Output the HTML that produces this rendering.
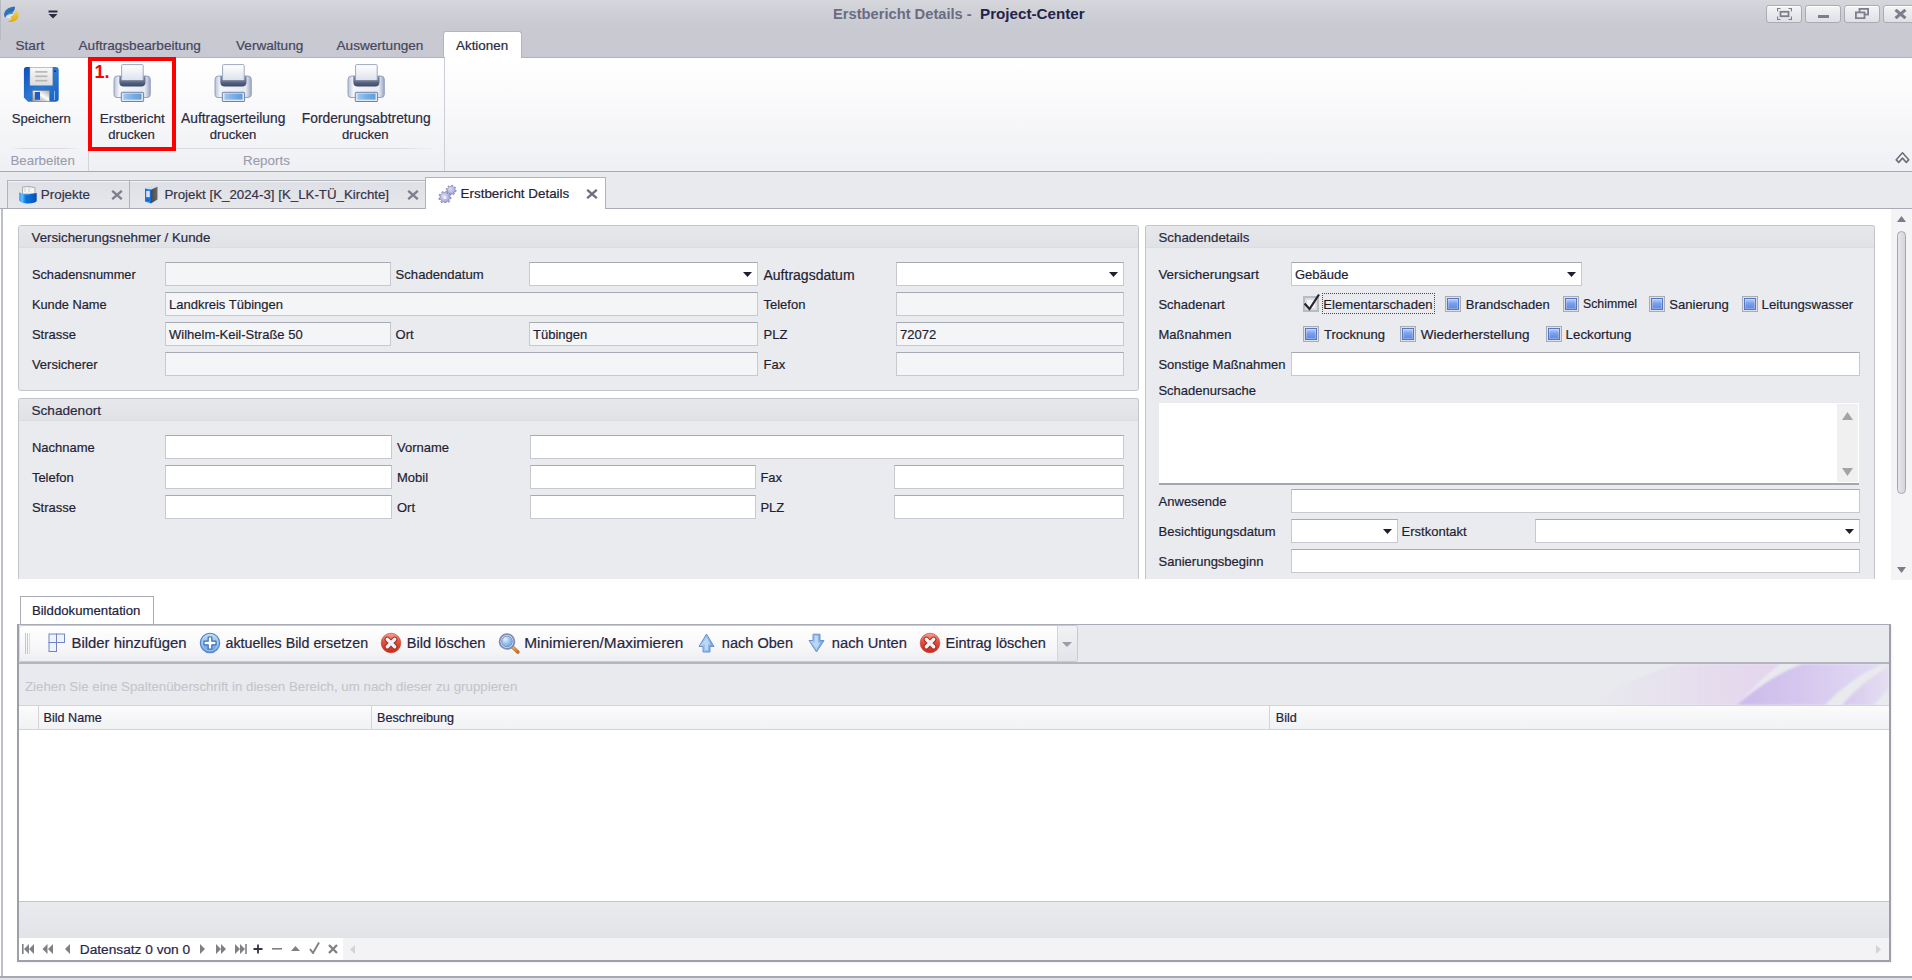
<!DOCTYPE html><html><head><meta charset="utf-8"><style>
html,body{margin:0;padding:0;width:1912px;height:980px;overflow:hidden;background:#fff;}
body{position:relative;font-family:"Liberation Sans",sans-serif;}
div{position:absolute;box-sizing:border-box;}
.t{white-space:nowrap;}
</style></head><body>
<div style="left:0px;top:0px;width:1912px;height:58px;background:linear-gradient(#d6d7dc 0px,#d3d4d9 6px,#cfd0d7 12px,#c9cad1 27px,#c7c8d1 57px);"></div>
<div style="left:0px;top:0px;width:1px;height:40px;background:#b8bac3;"></div>
<svg style="position:absolute;left:0px;top:2px" width="24" height="24" viewBox="0 0 24 24"><defs><linearGradient id="lgb" x1="0" y1="0" x2="1" y2="1"><stop offset="0" stop-color="#3a7fc8"/><stop offset="1" stop-color="#1f5a9e"/></linearGradient>
<linearGradient id="lgy" x1="0" y1="0" x2="0" y2="1"><stop offset="0" stop-color="#f4d64a"/><stop offset="1" stop-color="#e0a810"/></linearGradient></defs>
<path d="M15 4.8 C10 4.6 5.3 7 4.2 11.5 C3.8 13.5 4.4 15 5.5 15.6 C6.2 12.5 8.8 10.6 13.5 9.4 C14.6 8 15 6.5 15 4.8Z" fill="url(#lgb)"/>
<path d="M12.5 9.6 C9.5 10.2 7.5 11.5 6.8 13 C9 12 11 11.6 13 11.4Z" fill="#2a8ad8"/>
<path d="M6 15.5 C7.5 13.5 10 12.5 14.5 12 C14 14 12 15.5 9.5 16.2Z" fill="#e9ecf0" opacity="0.85"/>
<path d="M15.3 7.8 C18.5 9.5 19.6 13.5 17.8 16.6 C16 19.5 12 20.5 7.8 19.8 C10 18.6 11.5 17.3 12.2 16 L9.8 15 C13.2 13.8 15.6 11.5 15.3 7.8Z" fill="url(#lgy)"/></svg>
<svg style="position:absolute;left:48px;top:10px" width="10" height="9" viewBox="0 0 10 9"><rect x="0.5" y="0.5" width="9" height="2" fill="#2b2a40"/><path d="M0.5 4 L9.5 4 L5 8.5Z" fill="#2b2a40"/></svg>
<div class="t" style="left:833px;top:4.91px;font-size:14.7px;line-height:18px;color:#6b6c80;font-weight:bold;">Erstbericht Details -</div>
<div class="t" style="left:980px;top:4.23px;font-size:15.2px;line-height:19px;color:#23234a;font-weight:bold;">Project-Center</div>
<div style="left:1766px;top:5px;width:36px;height:18px;border:1px solid #a9abb5;border-radius:3px;background:linear-gradient(#f4f4f6,#dfe0e5);box-shadow:inset 0 1px 0 #fff;"></div>
<div style="left:1805px;top:5px;width:36px;height:18px;border:1px solid #a9abb5;border-radius:3px;background:linear-gradient(#f4f4f6,#dfe0e5);box-shadow:inset 0 1px 0 #fff;"></div>
<div style="left:1844px;top:5px;width:36px;height:18px;border:1px solid #a9abb5;border-radius:3px;background:linear-gradient(#f4f4f6,#dfe0e5);box-shadow:inset 0 1px 0 #fff;"></div>
<div style="left:1883px;top:5px;width:36px;height:18px;border:1px solid #a9abb5;border-radius:3px;background:linear-gradient(#f4f4f6,#dfe0e5);box-shadow:inset 0 1px 0 #fff;"></div>
<svg style="position:absolute;left:1777px;top:8px" width="15" height="12" viewBox="0 0 15 12"><path d="M0.5 3.5 V0.5 H3.5 M11.5 0.5 H14.5 V3.5 M14.5 8.5 V11.5 H11.5 M3.5 11.5 H0.5 V8.5" stroke="#7c7e8c" stroke-width="1.2" fill="none"/><rect x="3.5" y="3.8" width="8" height="4.4" stroke="#7c7e8c" stroke-width="1.8" fill="none"/></svg>
<div style="left:1818px;top:15px;width:11px;height:3px;background:#7c7e8c;"></div>
<svg style="position:absolute;left:1855px;top:8px" width="14" height="11" viewBox="0 0 14 11"><rect x="4.5" y="0.9" width="8.6" height="5.6" stroke="#7c7e8c" stroke-width="1.8" fill="none"/><rect x="0.9" y="4.4" width="8.6" height="5.8" stroke="#7c7e8c" stroke-width="1.8" fill="#e6e7eb"/></svg>
<svg style="position:absolute;left:1894px;top:9px" width="13" height="10" viewBox="0 0 13 10"><path d="M1.5 0.8 L11.5 9.2 M11.5 0.8 L1.5 9.2" stroke="#7c7e8c" stroke-width="3"/></svg>
<div class="t" style="left:15.5px;top:37.29px;font-size:13.6px;line-height:17px;color:#46465c;font-weight:normal;-webkit-text-stroke:0.2px #46465c;">Start</div>
<div class="t" style="left:78.5px;top:37.29px;font-size:13.6px;line-height:17px;color:#46465c;font-weight:normal;-webkit-text-stroke:0.2px #46465c;">Auftragsbearbeitung</div>
<div class="t" style="left:236px;top:37.29px;font-size:13.6px;line-height:17px;color:#46465c;font-weight:normal;-webkit-text-stroke:0.2px #46465c;">Verwaltung</div>
<div class="t" style="left:336.5px;top:37.29px;font-size:13.6px;line-height:17px;color:#46465c;font-weight:normal;-webkit-text-stroke:0.2px #46465c;">Auswertungen</div>
<div style="left:443px;top:31px;width:79px;height:28px;background:#fff;border:1px solid #b3b5c0;border-bottom:none;border-radius:3px 3px 0 0;"></div>
<div class="t" style="left:456px;top:37.36px;font-size:13.4px;line-height:17px;color:#2a2a40;font-weight:normal;-webkit-text-stroke:0.2px #2a2a40;">Aktionen</div>
<div style="left:0px;top:57px;width:1912px;height:115px;background:linear-gradient(#ffffff,#fbfbfc 30%,#eff0f4);border-top:1px solid #b0b2bc;border-bottom:1px solid #a7a9b4;"></div>
<div style="left:444px;top:58px;width:1px;height:113px;background:#cdced6;"></div>
<div style="left:445px;top:57px;width:76px;height:2px;background:#fff;"></div>
<div style="left:88px;top:148px;width:1px;height:23px;background:#d3d4da;"></div>
<div style="left:10px;top:148px;width:70px;height:1px;background:linear-gradient(90deg,rgba(220,221,226,0),#dcdde2 20%,#dcdde2 80%,rgba(220,221,226,0));"></div>
<div style="left:96px;top:148px;width:340px;height:1px;background:linear-gradient(90deg,rgba(220,221,226,0),#dcdde2 10%,#dcdde2 90%,rgba(220,221,226,0));"></div>
<div class="t" style="left:10.5px;top:152.39px;font-size:13.3px;line-height:17px;color:#9a9bac;font-weight:normal;-webkit-text-stroke:0.1px #9a9bac;">Bearbeiten</div>
<div class="t" style="left:243px;top:152.36px;font-size:13.4px;line-height:17px;color:#9a9bac;font-weight:normal;-webkit-text-stroke:0.1px #9a9bac;">Reports</div>
<svg style="position:absolute;left:1895px;top:151px" width="16" height="13" viewBox="0 0 16 13"><path d="M1.3 8.8 L7.5 1.8 L13.7 8.8 L11.3 11.3 L7.5 7.2 L3.7 11.3Z" fill="#f8f8fa" stroke="#6f7180" stroke-width="1.7" stroke-linejoin="round"/></svg>
<svg style="position:absolute;left:23px;top:67px" width="36" height="36" viewBox="0 0 36 36"><defs><linearGradient id="fb" x1="0" y1="0" x2="1" y2="1"><stop offset="0" stop-color="#0f4fb8"/><stop offset="0.5" stop-color="#2a78d4"/><stop offset="1" stop-color="#1d62c4"/></linearGradient>
<linearGradient id="fl" x1="0" y1="0" x2="0" y2="1"><stop offset="0" stop-color="#f8f8f8"/><stop offset="1" stop-color="#dcdcdc"/></linearGradient>
<linearGradient id="fs" x1="0" y1="1" x2="1" y2="0"><stop offset="0" stop-color="#9a9a9a"/><stop offset="0.45" stop-color="#d8d8d8"/><stop offset="0.55" stop-color="#ffffff"/><stop offset="1" stop-color="#a8a8a8"/></linearGradient></defs>
<path d="M3.5 0 H32.5 Q35.7 0 35.7 3.2 V31.5 Q35.7 34.7 32.5 34.7 H5 L0.9 30.6 V3.2 Q0.9 0 3.5 0Z" fill="url(#fb)"/>
<rect x="7" y="0.3" width="22.6" height="18" fill="url(#fl)" stroke="#b8b8b8" stroke-width="0.5"/>
<rect x="12.2" y="4.1" width="12.2" height="1.6" fill="#b4b4b4"/><rect x="12.2" y="8.5" width="12.2" height="1.6" fill="#b4b4b4"/><rect x="12.2" y="12.9" width="12.2" height="1.6" fill="#b4b4b4"/>
<rect x="9.7" y="23.7" width="16.7" height="11" fill="url(#fs)" stroke="#8c8c8c" stroke-width="0.6"/><rect x="11.9" y="25" width="5.1" height="7.8" fill="#1b5cc8"/>
<rect x="31" y="24" width="0.9" height="9" fill="#8fc0f0"/><circle cx="32" cy="4.2" r="0.9" fill="#0a2e70"/></svg>
<svg style="position:absolute;left:113px;top:64px" width="38" height="38" viewBox="0 0 38 38"><defs><linearGradient id="pb1" x1="0" y1="0" x2="1" y2="0"><stop offset="0" stop-color="#b9c2d8"/><stop offset="0.15" stop-color="#f4f6fb"/><stop offset="0.85" stop-color="#e6eaf3"/><stop offset="1" stop-color="#9aa6c2"/></linearGradient>
<linearGradient id="pp1" x1="0" y1="0" x2="0" y2="1"><stop offset="0" stop-color="#ffffff"/><stop offset="1" stop-color="#dde2ee"/></linearGradient>
<linearGradient id="pd1" x1="0" y1="0" x2="0" y2="1"><stop offset="0" stop-color="#8590ad"/><stop offset="1" stop-color="#3c4765"/></linearGradient>
<linearGradient id="pt1" x1="0" y1="0" x2="1" y2="0"><stop offset="0" stop-color="#9cc8f0"/><stop offset="0.5" stop-color="#76b0e6"/><stop offset="1" stop-color="#5c9ede"/></linearGradient></defs>
<path d="M4.5 12 Q1 12 1 15.5 V30.5 Q1 33.5 4 33.5 H34 Q37.3 33.5 37.3 30.5 V15.5 Q37.3 12 34 12Z" fill="url(#pb1)" stroke="#8f9bb8" stroke-width="0.9"/>
<path d="M6.3 12 H32.5 V18 Q32.5 22.6 28 22.6 H10.8 Q6.3 22.6 6.3 18Z" fill="url(#pd1)"/>
<rect x="8.6" y="0.6" width="21.6" height="16" rx="0.8" fill="url(#pp1)" stroke="#9ea8c4" stroke-width="1"/>
<rect x="7.5" y="16.4" width="24" height="1.2" fill="#6c7794"/>
<rect x="8.3" y="28.3" width="22.3" height="9.2" rx="0.6" fill="#dfe5f1" stroke="#7482a6" stroke-width="1"/>
<rect x="10.5" y="29.6" width="18" height="6" fill="url(#pt1)"/></svg>
<svg style="position:absolute;left:214px;top:64px" width="38" height="38" viewBox="0 0 38 38"><defs><linearGradient id="pb2" x1="0" y1="0" x2="1" y2="0"><stop offset="0" stop-color="#b9c2d8"/><stop offset="0.15" stop-color="#f4f6fb"/><stop offset="0.85" stop-color="#e6eaf3"/><stop offset="1" stop-color="#9aa6c2"/></linearGradient>
<linearGradient id="pp2" x1="0" y1="0" x2="0" y2="1"><stop offset="0" stop-color="#ffffff"/><stop offset="1" stop-color="#dde2ee"/></linearGradient>
<linearGradient id="pd2" x1="0" y1="0" x2="0" y2="1"><stop offset="0" stop-color="#8590ad"/><stop offset="1" stop-color="#3c4765"/></linearGradient>
<linearGradient id="pt2" x1="0" y1="0" x2="1" y2="0"><stop offset="0" stop-color="#9cc8f0"/><stop offset="0.5" stop-color="#76b0e6"/><stop offset="1" stop-color="#5c9ede"/></linearGradient></defs>
<path d="M4.5 12 Q1 12 1 15.5 V30.5 Q1 33.5 4 33.5 H34 Q37.3 33.5 37.3 30.5 V15.5 Q37.3 12 34 12Z" fill="url(#pb2)" stroke="#8f9bb8" stroke-width="0.9"/>
<path d="M6.3 12 H32.5 V18 Q32.5 22.6 28 22.6 H10.8 Q6.3 22.6 6.3 18Z" fill="url(#pd2)"/>
<rect x="8.6" y="0.6" width="21.6" height="16" rx="0.8" fill="url(#pp2)" stroke="#9ea8c4" stroke-width="1"/>
<rect x="7.5" y="16.4" width="24" height="1.2" fill="#6c7794"/>
<rect x="8.3" y="28.3" width="22.3" height="9.2" rx="0.6" fill="#dfe5f1" stroke="#7482a6" stroke-width="1"/>
<rect x="10.5" y="29.6" width="18" height="6" fill="url(#pt2)"/></svg>
<svg style="position:absolute;left:347px;top:64px" width="38" height="38" viewBox="0 0 38 38"><defs><linearGradient id="pb3" x1="0" y1="0" x2="1" y2="0"><stop offset="0" stop-color="#b9c2d8"/><stop offset="0.15" stop-color="#f4f6fb"/><stop offset="0.85" stop-color="#e6eaf3"/><stop offset="1" stop-color="#9aa6c2"/></linearGradient>
<linearGradient id="pp3" x1="0" y1="0" x2="0" y2="1"><stop offset="0" stop-color="#ffffff"/><stop offset="1" stop-color="#dde2ee"/></linearGradient>
<linearGradient id="pd3" x1="0" y1="0" x2="0" y2="1"><stop offset="0" stop-color="#8590ad"/><stop offset="1" stop-color="#3c4765"/></linearGradient>
<linearGradient id="pt3" x1="0" y1="0" x2="1" y2="0"><stop offset="0" stop-color="#9cc8f0"/><stop offset="0.5" stop-color="#76b0e6"/><stop offset="1" stop-color="#5c9ede"/></linearGradient></defs>
<path d="M4.5 12 Q1 12 1 15.5 V30.5 Q1 33.5 4 33.5 H34 Q37.3 33.5 37.3 30.5 V15.5 Q37.3 12 34 12Z" fill="url(#pb3)" stroke="#8f9bb8" stroke-width="0.9"/>
<path d="M6.3 12 H32.5 V18 Q32.5 22.6 28 22.6 H10.8 Q6.3 22.6 6.3 18Z" fill="url(#pd3)"/>
<rect x="8.6" y="0.6" width="21.6" height="16" rx="0.8" fill="url(#pp3)" stroke="#9ea8c4" stroke-width="1"/>
<rect x="7.5" y="16.4" width="24" height="1.2" fill="#6c7794"/>
<rect x="8.3" y="28.3" width="22.3" height="9.2" rx="0.6" fill="#dfe5f1" stroke="#7482a6" stroke-width="1"/>
<rect x="10.5" y="29.6" width="18" height="6" fill="url(#pt3)"/></svg>
<div class="t" style="left:11.8px;top:110.76px;font-size:13.1px;line-height:16px;color:#2a2a40;font-weight:normal;-webkit-text-stroke:0.2px #2a2a40;">Speichern</div>
<div class="t" style="left:99.8px;top:110.09px;font-size:13.6px;line-height:17px;color:#2a2a40;font-weight:normal;-webkit-text-stroke:0.2px #2a2a40;">Erstbericht</div>
<div class="t" style="left:108.3px;top:126.76px;font-size:13.1px;line-height:16px;color:#2a2a40;font-weight:normal;-webkit-text-stroke:0.2px #2a2a40;">drucken</div>
<div class="t" style="left:181px;top:110.02px;font-size:13.8px;line-height:17px;color:#2a2a40;font-weight:normal;-webkit-text-stroke:0.2px #2a2a40;">Auftragserteilung</div>
<div class="t" style="left:209.8px;top:126.76px;font-size:13.1px;line-height:16px;color:#2a2a40;font-weight:normal;-webkit-text-stroke:0.2px #2a2a40;">drucken</div>
<div class="t" style="left:301.8px;top:110.02px;font-size:13.8px;line-height:17px;color:#2a2a40;font-weight:normal;-webkit-text-stroke:0.2px #2a2a40;">Forderungsabtretung</div>
<div class="t" style="left:342px;top:126.76px;font-size:13.1px;line-height:16px;color:#2a2a40;font-weight:normal;-webkit-text-stroke:0.2px #2a2a40;">drucken</div>
<div style="left:88px;top:57px;width:88px;height:94px;border:4px solid #f00;"></div>
<div class="t" style="left:94.5px;top:60.76px;font-size:18px;line-height:22px;color:#f00;font-weight:bold;">1.</div>
<div style="left:0px;top:172px;width:1912px;height:37px;background:#e9eaee;"></div>
<div style="left:0px;top:208px;width:1912px;height:1px;background:#a9abb6;"></div>
<div style="left:7px;top:180px;width:123px;height:28px;background:linear-gradient(#dfe0e5,#e6e7eb);border:1px solid #b0b2bc;border-bottom:none;box-shadow:inset 0 1px 0 #f3f3f6;"></div>
<div style="left:130px;top:180px;width:296px;height:28px;background:linear-gradient(#dfe0e5,#e6e7eb);border:1px solid #b0b2bc;border-left:none;border-bottom:none;box-shadow:inset 0 1px 0 #f3f3f6;"></div>
<div style="left:425px;top:177px;width:181px;height:33px;background:#fff;border:1px solid #b0b2bc;border-bottom:none;"></div>
<svg style="position:absolute;left:18px;top:185px" width="20" height="19" viewBox="0 0 20 19"><defs><linearGradient id="pj" x1="0" y1="0" x2="1" y2="0"><stop offset="0" stop-color="#2a8af0"/><stop offset="0.15" stop-color="#6cc0ff"/><stop offset="0.35" stop-color="#0a7ee8"/><stop offset="1" stop-color="#0a4cb0"/></linearGradient></defs>
<path d="M4.5 2 L10 1.5 L17 2.5 V9 H4.5Z" fill="#f4f4f4" stroke="#a4a4a4" stroke-width="0.9"/>
<path d="M7 2.5 V7 M11 2 V7" stroke="#c8c8c8" stroke-width="0.8"/>
<path d="M1.3 7.2 Q5 9.8 9.5 9.6 L18.7 8 V16 Q17.5 18.3 10 18.6 Q3 18.3 1.3 15.5Z" fill="url(#pj)"/>
<path d="M9.3 9.7 V18.4" stroke="#0b5fc8" stroke-width="0.6"/></svg>
<div class="t" style="left:40.8px;top:186.46px;font-size:13.4px;line-height:17px;color:#33334a;font-weight:normal;-webkit-text-stroke:0.2px #33334a;">Projekte</div>
<svg style="position:absolute;left:111px;top:190px" width="12" height="10" viewBox="0 0 12 10"><path d="M1.2 0.8 L10.8 9.2 M10.8 0.8 L1.2 9.2" stroke="#7d7f8c" stroke-width="2.3"/></svg>
<svg style="position:absolute;left:144px;top:185px" width="14" height="19" viewBox="0 0 14 19"><defs><linearGradient id="bd" x1="0" y1="0" x2="1" y2="0"><stop offset="0" stop-color="#0a6ee0"/><stop offset="0.6" stop-color="#2a90f0"/><stop offset="1" stop-color="#0a62d0"/></linearGradient>
<linearGradient id="bs" x1="0" y1="0" x2="1" y2="0"><stop offset="0" stop-color="#4a4a4a"/><stop offset="1" stop-color="#6a6a6a"/></linearGradient></defs>
<path d="M7 4.5 L13.5 1.5 V14.5 L7 18.5Z" fill="url(#bs)"/>
<path d="M1 3.5 L7.5 1 L13.5 1.5 L7 4.5Z" fill="#d8dbe8"/>
<path d="M1 3.5 L7 4.5 V18.5 L1 16.5Z" fill="url(#bd)"/>
<rect x="2.2" y="6" width="3.6" height="6" fill="#e2dcf4"/><circle cx="4" cy="14.7" r="1" fill="none" stroke="#0a3c80" stroke-width="0.6"/></svg>
<div class="t" style="left:164.4px;top:186.49px;font-size:13.3px;line-height:17px;color:#33334a;font-weight:normal;-webkit-text-stroke:0.2px #33334a;">Projekt [K_2024-3] [K_LK-TÜ_Kirchte]</div>
<svg style="position:absolute;left:407px;top:190px" width="12" height="10" viewBox="0 0 12 10"><path d="M1.2 0.8 L10.8 9.2 M10.8 0.8 L1.2 9.2" stroke="#7d7f8c" stroke-width="2.3"/></svg>
<svg style="position:absolute;left:438px;top:184px" width="19" height="19" viewBox="0 0 19 19"><defs><radialGradient id="gg" cx="0.4" cy="0.35" r="0.7"><stop offset="0" stop-color="#dcdcf2"/><stop offset="1" stop-color="#9a9dd0"/></radialGradient></defs>
<path d="M16.90 6.14 L18.19 6.51 L17.92 7.86 L16.58 7.70 L15.86 8.77 L16.51 9.95 L15.37 10.71 L14.54 9.65 L13.26 9.90 L12.89 11.19 L11.54 10.92 L11.70 9.58 L10.63 8.86 L9.45 9.51 L8.69 8.37 L9.75 7.54 L9.50 6.26 L8.21 5.89 L8.48 4.54 L9.82 4.70 L10.54 3.63 L9.89 2.45 L11.03 1.69 L11.86 2.75 L13.14 2.50 L13.51 1.21 L14.86 1.48 L14.70 2.82 L15.77 3.54 L16.95 2.89 L17.71 4.03 L16.65 4.86Z" fill="url(#gg)" stroke="#777ab4" stroke-width="0.7"/>
<path d="M11.48 12.98 L13.10 13.26 L12.95 14.77 L11.31 14.72 L10.68 16.02 L11.74 17.28 L10.65 18.33 L9.42 17.25 L8.11 17.84 L8.11 19.48 L6.60 19.59 L6.36 17.97 L4.98 17.58 L3.92 18.84 L2.69 17.95 L3.55 16.55 L2.74 15.36 L1.12 15.65 L0.75 14.18 L2.31 13.66 L2.45 12.23 L1.03 11.41 L1.68 10.05 L3.21 10.65 L4.24 9.64 L3.68 8.10 L5.06 7.48 L5.84 8.92 L7.28 8.82 L7.84 7.27 L9.30 7.68 L8.97 9.29 L10.14 10.13 L11.56 9.31 L12.41 10.56 L11.13 11.58Z" fill="url(#gg)" stroke="#777ab4" stroke-width="0.7"/>
<circle cx="6.9" cy="13.4" r="1.5" fill="#f4f4fb"/><circle cx="13.2" cy="6.2" r="1.2" fill="#c9cae6"/></svg>
<div class="t" style="left:460.6px;top:184.66px;font-size:13.4px;line-height:17px;color:#22223a;font-weight:normal;-webkit-text-stroke:0.2px #22223a;">Erstbericht Details</div>
<svg style="position:absolute;left:586px;top:189px" width="12" height="10" viewBox="0 0 12 10"><path d="M1.2 0.8 L10.8 9.2 M10.8 0.8 L1.2 9.2" stroke="#6f717e" stroke-width="2.3"/></svg>
<div style="left:1px;top:209px;width:1911px;height:767px;background:#fff;border-left:2px solid #bdbfc7;"></div>
<div style="left:0px;top:976px;width:1912px;height:4px;background:#e1e2e6;border-top:2px solid #a6a8b2;"></div>
<div style="left:18px;top:225px;width:1121px;height:166px;background:#eaebef;border:1px solid #c2c3cb;border-radius:3px;"></div>
<div style="left:19px;top:226px;width:1119px;height:22px;background:linear-gradient(#e7e8ec,#e1e2e6);border-radius:2px 2px 0 0;border-bottom:1px solid #dcdde2;"></div>
<div class="t" style="left:31.5px;top:228.89px;font-size:13.3px;line-height:17px;color:#2a2a40;font-weight:normal;-webkit-text-stroke:0.2px #2a2a40;">Versicherungsnehmer / Kunde</div>
<div class="t" style="left:31.9px;top:267.06px;font-size:12.8px;line-height:16px;color:#1f1f33;font-weight:normal;-webkit-text-stroke:0.2px #1f1f33;">Schadensnummer</div>
<div class="t" style="left:31.9px;top:297.06px;font-size:12.8px;line-height:16px;color:#1f1f33;font-weight:normal;-webkit-text-stroke:0.2px #1f1f33;">Kunde Name</div>
<div class="t" style="left:31.9px;top:327.00px;font-size:13px;line-height:16px;color:#1f1f33;font-weight:normal;-webkit-text-stroke:0.2px #1f1f33;">Strasse</div>
<div class="t" style="left:31.9px;top:357.00px;font-size:13px;line-height:16px;color:#1f1f33;font-weight:normal;-webkit-text-stroke:0.2px #1f1f33;">Versicherer</div>
<div style="left:165px;top:262px;width:226px;height:24px;background:#f4f5f7;border:1px solid #c8c9d0;border-top-color:#a7a9b3;"></div>
<div class="t" style="left:395.6px;top:266.96px;font-size:13.1px;line-height:16px;color:#1f1f33;font-weight:normal;-webkit-text-stroke:0.2px #1f1f33;">Schadendatum</div>
<div style="left:529px;top:262px;width:229px;height:24px;background:#ffffff;border:1px solid #c8c9d0;border-top-color:#a7a9b3;"></div>
<svg style="position:absolute;left:743px;top:272px" width="9" height="5" viewBox="0 0 9 5"><path d="M0 0 H9 L4.5 5Z" fill="#1f1f2e"/></svg>
<div class="t" style="left:763.5px;top:265.65px;font-size:14px;line-height:18px;color:#1f1f33;font-weight:normal;-webkit-text-stroke:0.2px #1f1f33;">Auftragsdatum</div>
<div style="left:896px;top:262px;width:228px;height:24px;background:#ffffff;border:1px solid #c8c9d0;border-top-color:#a7a9b3;"></div>
<svg style="position:absolute;left:1109px;top:272px" width="9" height="5" viewBox="0 0 9 5"><path d="M0 0 H9 L4.5 5Z" fill="#1f1f2e"/></svg>
<div style="left:165px;top:292px;width:593px;height:24px;background:#f4f5f7;border:1px solid #c8c9d0;border-top-color:#a7a9b3;"></div>
<div class="t" style="left:169px;top:296.50px;font-size:13px;line-height:16px;color:#1f1f33;font-weight:normal;-webkit-text-stroke:0.2px #1f1f33;">Landkreis Tübingen</div>
<div class="t" style="left:763.5px;top:297.00px;font-size:13px;line-height:16px;color:#1f1f33;font-weight:normal;-webkit-text-stroke:0.2px #1f1f33;">Telefon</div>
<div style="left:896px;top:292px;width:228px;height:24px;background:#f4f5f7;border:1px solid #c8c9d0;border-top-color:#a7a9b3;"></div>
<div style="left:165px;top:322px;width:226px;height:24px;background:#f4f5f7;border:1px solid #c8c9d0;border-top-color:#a7a9b3;"></div>
<div class="t" style="left:169px;top:326.50px;font-size:13px;line-height:16px;color:#1f1f33;font-weight:normal;-webkit-text-stroke:0.2px #1f1f33;">Wilhelm-Keil-Straße 50</div>
<div class="t" style="left:395.6px;top:327.00px;font-size:13px;line-height:16px;color:#1f1f33;font-weight:normal;-webkit-text-stroke:0.2px #1f1f33;">Ort</div>
<div style="left:529px;top:322px;width:229px;height:24px;background:#f4f5f7;border:1px solid #c8c9d0;border-top-color:#a7a9b3;"></div>
<div class="t" style="left:533px;top:326.50px;font-size:13px;line-height:16px;color:#1f1f33;font-weight:normal;-webkit-text-stroke:0.2px #1f1f33;">Tübingen</div>
<div class="t" style="left:763.5px;top:327.00px;font-size:13px;line-height:16px;color:#1f1f33;font-weight:normal;-webkit-text-stroke:0.2px #1f1f33;">PLZ</div>
<div style="left:896px;top:322px;width:228px;height:24px;background:#f4f5f7;border:1px solid #c8c9d0;border-top-color:#a7a9b3;"></div>
<div class="t" style="left:900px;top:326.50px;font-size:13px;line-height:16px;color:#1f1f33;font-weight:normal;-webkit-text-stroke:0.2px #1f1f33;">72072</div>
<div style="left:165px;top:352px;width:593px;height:24px;background:#f4f5f7;border:1px solid #c8c9d0;border-top-color:#a7a9b3;"></div>
<div class="t" style="left:763.5px;top:357.00px;font-size:13px;line-height:16px;color:#1f1f33;font-weight:normal;-webkit-text-stroke:0.2px #1f1f33;">Fax</div>
<div style="left:896px;top:352px;width:228px;height:24px;background:#f4f5f7;border:1px solid #c8c9d0;border-top-color:#a7a9b3;"></div>
<div style="left:18px;top:398px;width:1121px;height:182px;background:#eaebef;border:1px solid #c2c3cb;border-radius:3px;border-bottom:none;border-radius:3px 3px 0 0;"></div>
<div style="left:19px;top:399px;width:1119px;height:22px;background:linear-gradient(#e7e8ec,#e1e2e6);border-radius:2px 2px 0 0;border-bottom:1px solid #dcdde2;"></div>
<div class="t" style="left:31.5px;top:401.79px;font-size:13.6px;line-height:17px;color:#2a2a40;font-weight:normal;-webkit-text-stroke:0.2px #2a2a40;">Schadenort</div>
<div class="t" style="left:31.9px;top:439.50px;font-size:13px;line-height:16px;color:#1f1f33;font-weight:normal;-webkit-text-stroke:0.2px #1f1f33;">Nachname</div>
<div class="t" style="left:31.9px;top:469.50px;font-size:13px;line-height:16px;color:#1f1f33;font-weight:normal;-webkit-text-stroke:0.2px #1f1f33;">Telefon</div>
<div class="t" style="left:31.9px;top:499.50px;font-size:13px;line-height:16px;color:#1f1f33;font-weight:normal;-webkit-text-stroke:0.2px #1f1f33;">Strasse</div>
<div style="left:165px;top:435px;width:227px;height:24px;background:#ffffff;border:1px solid #c8c9d0;border-top-color:#a7a9b3;"></div>
<div class="t" style="left:397px;top:439.50px;font-size:13px;line-height:16px;color:#1f1f33;font-weight:normal;-webkit-text-stroke:0.2px #1f1f33;">Vorname</div>
<div style="left:530px;top:435px;width:594px;height:24px;background:#ffffff;border:1px solid #c8c9d0;border-top-color:#a7a9b3;"></div>
<div style="left:165px;top:465px;width:227px;height:24px;background:#ffffff;border:1px solid #c8c9d0;border-top-color:#a7a9b3;"></div>
<div class="t" style="left:397px;top:469.50px;font-size:13px;line-height:16px;color:#1f1f33;font-weight:normal;-webkit-text-stroke:0.2px #1f1f33;">Mobil</div>
<div style="left:530px;top:465px;width:226px;height:24px;background:#ffffff;border:1px solid #c8c9d0;border-top-color:#a7a9b3;"></div>
<div class="t" style="left:760.4px;top:469.50px;font-size:13px;line-height:16px;color:#1f1f33;font-weight:normal;-webkit-text-stroke:0.2px #1f1f33;">Fax</div>
<div style="left:894px;top:465px;width:230px;height:24px;background:#ffffff;border:1px solid #c8c9d0;border-top-color:#a7a9b3;"></div>
<div style="left:165px;top:495px;width:227px;height:24px;background:#ffffff;border:1px solid #c8c9d0;border-top-color:#a7a9b3;"></div>
<div class="t" style="left:397px;top:499.50px;font-size:13px;line-height:16px;color:#1f1f33;font-weight:normal;-webkit-text-stroke:0.2px #1f1f33;">Ort</div>
<div style="left:530px;top:495px;width:226px;height:24px;background:#ffffff;border:1px solid #c8c9d0;border-top-color:#a7a9b3;"></div>
<div class="t" style="left:760.4px;top:499.50px;font-size:13px;line-height:16px;color:#1f1f33;font-weight:normal;-webkit-text-stroke:0.2px #1f1f33;">PLZ</div>
<div style="left:894px;top:495px;width:230px;height:24px;background:#ffffff;border:1px solid #c8c9d0;border-top-color:#a7a9b3;"></div>
<div style="left:1145px;top:225px;width:730px;height:355px;background:#eaebef;border:1px solid #c2c3cb;border-radius:3px;border-bottom:none;border-radius:3px 3px 0 0;"></div>
<div style="left:1146px;top:226px;width:728px;height:22px;background:linear-gradient(#e7e8ec,#e1e2e6);border-radius:2px 2px 0 0;border-bottom:1px solid #dcdde2;"></div>
<div class="t" style="left:1158.5px;top:228.89px;font-size:13.3px;line-height:17px;color:#2a2a40;font-weight:normal;-webkit-text-stroke:0.2px #2a2a40;">Schadendetails</div>
<div class="t" style="left:1158.4px;top:266.06px;font-size:13.4px;line-height:17px;color:#1f1f33;font-weight:normal;-webkit-text-stroke:0.2px #1f1f33;">Versicherungsart</div>
<div style="left:1291px;top:262px;width:291px;height:24px;background:#ffffff;border:1px solid #c8c9d0;border-top-color:#a7a9b3;"></div>
<div class="t" style="left:1295px;top:266.50px;font-size:13px;line-height:16px;color:#1f1f33;font-weight:normal;-webkit-text-stroke:0.2px #1f1f33;">Gebäude</div>
<svg style="position:absolute;left:1567px;top:272px" width="9" height="5" viewBox="0 0 9 5"><path d="M0 0 H9 L4.5 5Z" fill="#1f1f2e"/></svg>
<div class="t" style="left:1158.4px;top:296.70px;font-size:13px;line-height:16px;color:#1f1f33;font-weight:normal;-webkit-text-stroke:0.2px #1f1f33;">Schadenart</div>
<div style="left:1303px;top:296px;width:16px;height:16px;background:#f4f4f6;border:2px solid #b9bbc4;box-shadow:inset 0 0 0 2px #dcdde3;"></div>
<svg style="position:absolute;left:1303px;top:293px" width="18" height="19" viewBox="0 0 18 19"><path d="M1.6 10.5 L6.5 16 L16 1.5" stroke="#24232e" stroke-width="2.2" fill="none" stroke-linejoin="miter"/></svg>
<div style="left:1322px;top:293px;width:113px;height:21px;border:1px dotted #4a4a55;"></div>
<div class="t" style="left:1323.3px;top:296.66px;font-size:13.1px;line-height:16px;color:#1f1f33;font-weight:normal;-webkit-text-stroke:0.2px #1f1f33;">Elementarschaden</div>
<div style="left:1445px;top:296px;width:16px;height:16px;background:#dfe0e5;border:1px solid #a9abb5;"></div>
<div style="left:1447px;top:298px;width:12px;height:12px;background:linear-gradient(#b9cdf5,#7aa0ea 45%,#5f88e0);border:1px solid #5577c8;box-shadow:inset 0 0 0 1px rgba(255,255,255,0.25);"></div>
<div class="t" style="left:1465.8px;top:296.70px;font-size:13px;line-height:16px;color:#1f1f33;font-weight:normal;-webkit-text-stroke:0.2px #1f1f33;">Brandschaden</div>
<div style="left:1562.5px;top:296px;width:16px;height:16px;background:#dfe0e5;border:1px solid #a9abb5;"></div>
<div style="left:1564.5px;top:298px;width:12px;height:12px;background:linear-gradient(#b9cdf5,#7aa0ea 45%,#5f88e0);border:1px solid #5577c8;box-shadow:inset 0 0 0 1px rgba(255,255,255,0.25);"></div>
<div class="t" style="left:1583px;top:297.44px;font-size:12.3px;line-height:15px;color:#1f1f33;font-weight:normal;-webkit-text-stroke:0.2px #1f1f33;">Schimmel</div>
<div style="left:1649px;top:296px;width:16px;height:16px;background:#dfe0e5;border:1px solid #a9abb5;"></div>
<div style="left:1651px;top:298px;width:12px;height:12px;background:linear-gradient(#b9cdf5,#7aa0ea 45%,#5f88e0);border:1px solid #5577c8;box-shadow:inset 0 0 0 1px rgba(255,255,255,0.25);"></div>
<div class="t" style="left:1669.2px;top:296.66px;font-size:13.1px;line-height:16px;color:#1f1f33;font-weight:normal;-webkit-text-stroke:0.2px #1f1f33;">Sanierung</div>
<div style="left:1741.5px;top:296px;width:16px;height:16px;background:#dfe0e5;border:1px solid #a9abb5;"></div>
<div style="left:1743.5px;top:298px;width:12px;height:12px;background:linear-gradient(#b9cdf5,#7aa0ea 45%,#5f88e0);border:1px solid #5577c8;box-shadow:inset 0 0 0 1px rgba(255,255,255,0.25);"></div>
<div class="t" style="left:1761.6px;top:296.63px;font-size:13.2px;line-height:16px;color:#1f1f33;font-weight:normal;-webkit-text-stroke:0.2px #1f1f33;">Leitungswasser</div>
<div class="t" style="left:1158.4px;top:326.70px;font-size:13px;line-height:16px;color:#1f1f33;font-weight:normal;-webkit-text-stroke:0.2px #1f1f33;">Maßnahmen</div>
<div style="left:1303px;top:326px;width:16px;height:16px;background:#dfe0e5;border:1px solid #a9abb5;"></div>
<div style="left:1305px;top:328px;width:12px;height:12px;background:linear-gradient(#b9cdf5,#7aa0ea 45%,#5f88e0);border:1px solid #5577c8;box-shadow:inset 0 0 0 1px rgba(255,255,255,0.25);"></div>
<div class="t" style="left:1324px;top:326.70px;font-size:13px;line-height:16px;color:#1f1f33;font-weight:normal;-webkit-text-stroke:0.2px #1f1f33;">Trocknung</div>
<div style="left:1400px;top:326px;width:16px;height:16px;background:#dfe0e5;border:1px solid #a9abb5;"></div>
<div style="left:1402px;top:328px;width:12px;height:12px;background:linear-gradient(#b9cdf5,#7aa0ea 45%,#5f88e0);border:1px solid #5577c8;box-shadow:inset 0 0 0 1px rgba(255,255,255,0.25);"></div>
<div class="t" style="left:1420.8px;top:326.02px;font-size:13.5px;line-height:17px;color:#1f1f33;font-weight:normal;-webkit-text-stroke:0.2px #1f1f33;">Wiederherstellung</div>
<div style="left:1545.5px;top:326px;width:16px;height:16px;background:#dfe0e5;border:1px solid #a9abb5;"></div>
<div style="left:1547.5px;top:328px;width:12px;height:12px;background:linear-gradient(#b9cdf5,#7aa0ea 45%,#5f88e0);border:1px solid #5577c8;box-shadow:inset 0 0 0 1px rgba(255,255,255,0.25);"></div>
<div class="t" style="left:1565.6px;top:326.09px;font-size:13.3px;line-height:17px;color:#1f1f33;font-weight:normal;-webkit-text-stroke:0.2px #1f1f33;">Leckortung</div>
<div class="t" style="left:1158.4px;top:357.00px;font-size:13px;line-height:16px;color:#1f1f33;font-weight:normal;-webkit-text-stroke:0.2px #1f1f33;">Sonstige Maßnahmen</div>
<div style="left:1291px;top:352px;width:569px;height:24px;background:#ffffff;border:1px solid #c8c9d0;border-top-color:#a7a9b3;"></div>
<div class="t" style="left:1158.4px;top:383.00px;font-size:13px;line-height:16px;color:#1f1f33;font-weight:normal;-webkit-text-stroke:0.2px #1f1f33;">Schadenursache</div>
<div style="left:1159px;top:403px;width:700px;height:82px;background:#fff;border-bottom:2px solid #a4a6b0;"></div>
<div style="left:1837px;top:404px;width:21px;height:78px;background:#f0f0f0;"></div>
<svg style="position:absolute;left:1842px;top:412px" width="11" height="8" viewBox="0 0 11 8"><path d="M0 8 L5.5 0 L11 8Z" fill="#a3a3a3"/></svg>
<svg style="position:absolute;left:1842px;top:468px" width="11" height="8" viewBox="0 0 11 8"><path d="M0 0 L5.5 8 L11 0Z" fill="#a3a3a3"/></svg>
<div class="t" style="left:1158.6px;top:494.00px;font-size:13px;line-height:16px;color:#1f1f33;font-weight:normal;-webkit-text-stroke:0.2px #1f1f33;">Anwesende</div>
<div style="left:1291px;top:489px;width:569px;height:24px;background:#ffffff;border:1px solid #c8c9d0;border-top-color:#a7a9b3;"></div>
<div class="t" style="left:1158.6px;top:524.00px;font-size:13px;line-height:16px;color:#1f1f33;font-weight:normal;-webkit-text-stroke:0.2px #1f1f33;">Besichtigungsdatum</div>
<div style="left:1291px;top:519px;width:107px;height:24px;background:#ffffff;border:1px solid #c8c9d0;border-top-color:#a7a9b3;"></div>
<svg style="position:absolute;left:1383px;top:529px" width="9" height="5" viewBox="0 0 9 5"><path d="M0 0 H9 L4.5 5Z" fill="#1f1f2e"/></svg>
<div class="t" style="left:1401.6px;top:524.00px;font-size:13px;line-height:16px;color:#1f1f33;font-weight:normal;-webkit-text-stroke:0.2px #1f1f33;">Erstkontakt</div>
<div style="left:1535px;top:519px;width:325px;height:24px;background:#ffffff;border:1px solid #c8c9d0;border-top-color:#a7a9b3;"></div>
<svg style="position:absolute;left:1845px;top:529px" width="9" height="5" viewBox="0 0 9 5"><path d="M0 0 H9 L4.5 5Z" fill="#1f1f2e"/></svg>
<div class="t" style="left:1158.6px;top:554.00px;font-size:13px;line-height:16px;color:#1f1f33;font-weight:normal;-webkit-text-stroke:0.2px #1f1f33;">Sanierungsbeginn</div>
<div style="left:1291px;top:549px;width:569px;height:24px;background:#ffffff;border:1px solid #c8c9d0;border-top-color:#a7a9b3;"></div>
<div style="left:3px;top:579px;width:1888px;height:16px;background:#fff;"></div>
<div style="left:1891px;top:209px;width:21px;height:371px;background:#f4f4f6;"></div>
<svg style="position:absolute;left:1897px;top:216px" width="9" height="6" viewBox="0 0 9 6"><path d="M0 6 L4.5 0 L9 6Z" fill="#7b7d8a"/></svg>
<div style="left:1897px;top:231px;width:9px;height:263px;background:linear-gradient(90deg,#e6e7eb,#d5d6dc);border:1px solid #a4a6b2;border-radius:5px;"></div>
<svg style="position:absolute;left:1897px;top:567px" width="9" height="6" viewBox="0 0 9 6"><path d="M0 0 L4.5 6 L9 0Z" fill="#7b7d8a"/></svg>
<div style="left:20px;top:596px;width:134px;height:29px;background:#fff;border:1px solid #a9abb6;border-bottom:none;"></div>
<div class="t" style="left:31.9px;top:602.73px;font-size:13.2px;line-height:16px;color:#22223a;font-weight:normal;-webkit-text-stroke:0.2px #22223a;">Bilddokumentation</div>
<div style="left:17px;top:624px;width:1874px;height:338px;background:#fff;border:2px solid #9d9fab;border-top:1px solid #a9abb6;box-shadow:1px 1px 2px rgba(0,0,0,0.06);"></div>
<div style="left:19px;top:625px;width:1870px;height:38px;background:#e9eaee;"></div>
<div style="left:19px;top:625px;width:1059px;height:37px;background:linear-gradient(#ffffff,#f7f7f9 60%,#eeeff2);border:1px solid #c9cad1;border-radius:3px;border-left-color:#d9dae0;"></div>
<div style="left:25px;top:633px;width:1px;height:21px;background:#c4c6ce;"></div>
<div style="left:27px;top:633px;width:1px;height:21px;background:#c4c6ce;"></div>
<div style="left:29px;top:633px;width:1px;height:21px;background:#dcdde2;"></div>
<div style="left:1057px;top:626px;width:20px;height:35px;background:linear-gradient(#f2f2f5,#e3e4e8);border-left:1px solid #d5d6dc;border-radius:0 3px 3px 0;"></div>
<svg style="position:absolute;left:1062px;top:642px" width="10" height="5" viewBox="0 0 10 5"><path d="M0 0 H10 L5 5Z" fill="#9a9ca8"/></svg>
<svg style="position:absolute;left:48px;top:633px" width="18" height="20" viewBox="0 0 18 20"><rect x="1" y="1" width="7.5" height="8.5" fill="#eef2fb" stroke="#6f86c0"/><rect x="8.5" y="1" width="8" height="8.5" fill="#eef2fb" stroke="#6f86c0"/><rect x="1" y="9.5" width="7.5" height="9" fill="#eef2fb" stroke="#6f86c0"/></svg>
<div class="t" style="left:71.5px;top:633.54px;font-size:14.9px;line-height:19px;color:#27263d;font-weight:normal;-webkit-text-stroke:0.2px #27263d;">Bilder hinzufügen</div>
<svg style="position:absolute;left:199px;top:632px" width="22" height="22" viewBox="0 0 22 22"><defs><linearGradient id="bl" x1="0" y1="0" x2="0" y2="1"><stop offset="0" stop-color="#c4e2f8"/><stop offset="0.5" stop-color="#8ec0ec"/><stop offset="1" stop-color="#5f98dc"/></linearGradient></defs>
<circle cx="11" cy="11" r="9.7" fill="url(#bl)" stroke="#4f82c8" stroke-width="1.1"/><circle cx="11" cy="11" r="7.8" fill="none" stroke="#b8daf6" stroke-width="0.8" opacity="0.7"/>
<path d="M9.2 5 H12.8 V9.2 H17 V12.8 H12.8 V17 H9.2 V12.8 H5 V9.2 H9.2Z" fill="#fff" stroke="#3d6db4" stroke-width="1.2" stroke-linejoin="round"/></svg>
<div class="t" style="left:225.5px;top:634.26px;font-size:14.26px;line-height:18px;color:#27263d;font-weight:normal;-webkit-text-stroke:0.2px #27263d;">aktuelles Bild ersetzen</div>
<svg style="position:absolute;left:380px;top:632px" width="22" height="22" viewBox="0 0 22 22"><defs><linearGradient id="rx1" x1="0" y1="0" x2="0" y2="1"><stop offset="0" stop-color="#f4a494"/><stop offset="0.45" stop-color="#e0503c"/><stop offset="1" stop-color="#c82a1c"/></linearGradient></defs>
<circle cx="11" cy="11" r="9.8" fill="url(#rx1)" stroke="#c03222" stroke-width="0.6"/>
<path d="M7.3 7.3 L14.7 14.7 M14.7 7.3 L7.3 14.7" stroke="#a8281a" stroke-width="5.4" stroke-linecap="round"/>
<path d="M7.3 7.3 L14.7 14.7 M14.7 7.3 L7.3 14.7" stroke="#eef2fa" stroke-width="3.4" stroke-linecap="round"/></svg>
<div class="t" style="left:406.7px;top:634.14px;font-size:14.6px;line-height:18px;color:#27263d;font-weight:normal;-webkit-text-stroke:0.2px #27263d;">Bild löschen</div>
<svg style="position:absolute;left:498px;top:632px" width="22" height="22" viewBox="0 0 22 22"><defs><radialGradient id="mg" cx="0.35" cy="0.3" r="0.75"><stop offset="0" stop-color="#eef0fb"/><stop offset="0.5" stop-color="#9cc6f0"/><stop offset="1" stop-color="#6aa6e0"/></radialGradient>
<linearGradient id="mh" x1="0" y1="0" x2="1" y2="1"><stop offset="0" stop-color="#f0b060"/><stop offset="1" stop-color="#c87028"/></linearGradient></defs>
<path d="M14.6 15.2 L19.8 20" stroke="#b8682a" stroke-width="3.6" stroke-linecap="round"/><path d="M14.6 15.2 L19.8 20" stroke="url(#mh)" stroke-width="2.4" stroke-linecap="round"/>
<circle cx="9" cy="9.5" r="7.4" fill="#dfe6f4" stroke="#7f8cb8" stroke-width="1.8"/><circle cx="9" cy="9.5" r="5.4" fill="url(#mg)" stroke="#6f8ac4" stroke-width="0.8"/></svg>
<div class="t" style="left:524.3px;top:633.36px;font-size:15.4px;line-height:19px;color:#27263d;font-weight:normal;-webkit-text-stroke:0.2px #27263d;">Minimieren/Maximieren</div>
<svg style="position:absolute;left:698px;top:633px" width="17" height="20" viewBox="0 0 17 20"><defs><linearGradient id="ua" x1="0" y1="0" x2="1" y2="0"><stop offset="0" stop-color="#b8d6f6"/><stop offset="1" stop-color="#6ea4e2"/></linearGradient></defs>
<path d="M8.5 1 L16 13.5 H12 V19 H5 V13.5 H1Z" fill="url(#ua)" stroke="#6a92cc" stroke-width="1" stroke-linejoin="round"/><path d="M8.5 4 L12.5 11.5 H10 V17 H7 V11.5 H4.5Z" fill="#d8e8fa" opacity="0.6"/></svg>
<div class="t" style="left:721.8px;top:634.16px;font-size:14.55px;line-height:18px;color:#27263d;font-weight:normal;-webkit-text-stroke:0.2px #27263d;">nach Oben</div>
<svg style="position:absolute;left:808px;top:633px" width="17" height="20" viewBox="0 0 17 20"><defs><linearGradient id="da" x1="0" y1="0" x2="1" y2="0"><stop offset="0" stop-color="#b8d6f6"/><stop offset="1" stop-color="#6ea4e2"/></linearGradient></defs>
<path d="M8.5 19 L16 7.5 H12 V1.2 H5 V7.5 H1Z" fill="url(#da)" stroke="#6a92cc" stroke-width="1" stroke-linejoin="round"/><path d="M8.5 16 L12.5 9.5 H10 V3 H7 V9.5 H4.5Z" fill="#d8e8fa" opacity="0.6"/></svg>
<div class="t" style="left:831.8px;top:634.11px;font-size:14.7px;line-height:18px;color:#27263d;font-weight:normal;-webkit-text-stroke:0.2px #27263d;">nach Unten</div>
<svg style="position:absolute;left:919px;top:632px" width="22" height="22" viewBox="0 0 22 22"><defs><linearGradient id="rx2" x1="0" y1="0" x2="0" y2="1"><stop offset="0" stop-color="#f4a494"/><stop offset="0.45" stop-color="#e0503c"/><stop offset="1" stop-color="#c82a1c"/></linearGradient></defs>
<circle cx="11" cy="11" r="9.8" fill="url(#rx2)" stroke="#c03222" stroke-width="0.6"/>
<path d="M7.3 7.3 L14.7 14.7 M14.7 7.3 L7.3 14.7" stroke="#a8281a" stroke-width="5.4" stroke-linecap="round"/>
<path d="M7.3 7.3 L14.7 14.7 M14.7 7.3 L7.3 14.7" stroke="#eef2fa" stroke-width="3.4" stroke-linecap="round"/></svg>
<div class="t" style="left:945.6px;top:634.15px;font-size:14.56px;line-height:18px;color:#27263d;font-weight:normal;-webkit-text-stroke:0.2px #27263d;">Eintrag löschen</div>
<div style="left:19px;top:662px;width:1870px;height:43px;background:#e9eaee;border-top:2px solid #b3b5bf;"></div>
<div class="t" style="left:25px;top:677.79px;font-size:13.3px;line-height:17px;color:#c4c5cc;font-weight:normal;-webkit-text-stroke:0.1px #c4c5cc;">Ziehen Sie eine Spaltenüberschrift in diesen Bereich, um nach dieser zu gruppieren</div>
<svg style="position:absolute;left:1580px;top:664px" width="309" height="41" viewBox="0 0 309 41"><defs><linearGradient id="sw1" x1="0" y1="0" x2="1" y2="0"><stop offset="0" stop-color="#e6dcef" stop-opacity="0"/><stop offset="0.6" stop-color="#e4d6ee" stop-opacity="0.8"/><stop offset="1" stop-color="#e3cfee"/></linearGradient>
<linearGradient id="sw2" x1="0" y1="0" x2="1" y2="0"><stop offset="0" stop-color="#c4aeea"/><stop offset="0.5" stop-color="#d2c2f0"/><stop offset="1" stop-color="#e2d8f4"/></linearGradient>
<linearGradient id="sw3" x1="0" y1="0" x2="1" y2="0"><stop offset="0" stop-color="#d0bfee"/><stop offset="1" stop-color="#e6def4"/></linearGradient></defs>
<filter id="swb" x="-5%" y="-20%" width="110%" height="140%"><feGaussianBlur stdDeviation="0.8"/></filter>
<g filter="url(#swb)" opacity="0.8"><path d="M0 41 L158 41 Q180 15 200 0 L95 0 Q40 20 0 41Z" fill="url(#sw1)"/>
<path d="M157 41 Q190 12 222 0 L302 0 Q268 16 245 41Z" fill="url(#sw2)"/>
<path d="M262 41 Q282 18 309 2 V26 Q300 33 294 41Z" fill="url(#sw3)"/></g></svg>
<div style="left:19px;top:705px;width:1870px;height:25px;background:linear-gradient(#fbfbfc,#f1f2f4);border-top:1px solid #d3d4da;border-bottom:1px solid #d3d4da;"></div>
<div style="left:38px;top:706px;width:1px;height:23px;background:#d3d4da;"></div>
<div style="left:371px;top:706px;width:1px;height:23px;background:#d3d4da;"></div>
<div style="left:1269px;top:706px;width:1px;height:23px;background:#d3d4da;"></div>
<div class="t" style="left:43.6px;top:710.03px;font-size:12.6px;line-height:16px;color:#22223a;font-weight:normal;-webkit-text-stroke:0.2px #22223a;">Bild Name</div>
<div class="t" style="left:377px;top:710.03px;font-size:12.6px;line-height:16px;color:#22223a;font-weight:normal;-webkit-text-stroke:0.2px #22223a;">Beschreibung</div>
<div class="t" style="left:1275.8px;top:710.03px;font-size:12.6px;line-height:16px;color:#22223a;font-weight:normal;-webkit-text-stroke:0.2px #22223a;">Bild</div>
<div style="left:19px;top:901px;width:1870px;height:37px;background:linear-gradient(#e9eaee,#e3e4e8);border-top:1px solid #c3c5cc;"></div>
<div style="left:19px;top:938px;width:1870px;height:22px;background:#fff;"></div>
<div style="left:343px;top:938px;width:1546px;height:22px;background:#f3f3f5;"></div>
<svg style="position:absolute;left:22px;top:944px" width="12" height="10" viewBox="0 0 12 10"><rect x="0" y="0" width="1.6" height="10" fill="#7f7f86"/><path d="M7 0 V10 L2 5Z M12 0 V10 L7 5Z" fill="#7f7f86"/></svg>
<svg style="position:absolute;left:42px;top:944px" width="11" height="10" viewBox="0 0 11 10"><path d="M5.5 0 V10 L0.5 5Z M11 0 V10 L6 5Z" fill="#7f7f86"/></svg>
<svg style="position:absolute;left:65px;top:944px" width="5" height="10" viewBox="0 0 5 10"><path d="M5 0 V10 L0 5Z" fill="#7f7f86"/></svg>
<div class="t" style="left:79.8px;top:941.05px;font-size:13.7px;line-height:17px;color:#26264a;font-weight:normal;-webkit-text-stroke:0.2px #26264a;">Datensatz 0 von 0</div>
<svg style="position:absolute;left:200px;top:944px" width="5" height="10" viewBox="0 0 5 10"><path d="M0 0 V10 L5 5Z" fill="#7f7f86"/></svg>
<svg style="position:absolute;left:216px;top:944px" width="10" height="10" viewBox="0 0 10 10"><path d="M0 0 V10 L5 5Z M5 0 V10 L10 5Z" fill="#7f7f86"/></svg>
<svg style="position:absolute;left:235px;top:944px" width="12" height="10" viewBox="0 0 12 10"><path d="M0 0 V10 L5 5Z M5 0 V10 L10 5Z" fill="#7f7f86"/><rect x="10.2" y="0" width="1.6" height="10" fill="#7f7f86"/></svg>
<svg style="position:absolute;left:253px;top:944px" width="10" height="10" viewBox="0 0 10 10"><path d="M5 0.5 V9.5 M0.5 5 H9.5" stroke="#34344a" stroke-width="1.8"/></svg>
<svg style="position:absolute;left:272px;top:948px" width="10" height="2" viewBox="0 0 10 2"><rect x="0" y="0" width="10" height="1.6" fill="#7f7f86"/></svg>
<svg style="position:absolute;left:291px;top:946px" width="9" height="5" viewBox="0 0 9 5"><path d="M0 5 L4.5 0 L9 5Z" fill="#7f7f86"/></svg>
<svg style="position:absolute;left:309px;top:942px" width="11" height="12" viewBox="0 0 11 12"><path d="M1 7 L4 11 L10 0.5" stroke="#7f7f86" stroke-width="1.9" fill="none"/></svg>
<svg style="position:absolute;left:328px;top:944px" width="10" height="10" viewBox="0 0 10 10"><path d="M1 1 L9 9 M9 1 L1 9" stroke="#7f7f86" stroke-width="2.3"/></svg>
<svg style="position:absolute;left:350px;top:945px" width="5" height="9" viewBox="0 0 5 9"><path d="M5 0 V9 L0 4.5Z" fill="#d2d3da"/></svg>
<svg style="position:absolute;left:1876px;top:945px" width="5" height="9" viewBox="0 0 5 9"><path d="M0 0 V9 L5 4.5Z" fill="#d2d3da"/></svg>
</body></html>
